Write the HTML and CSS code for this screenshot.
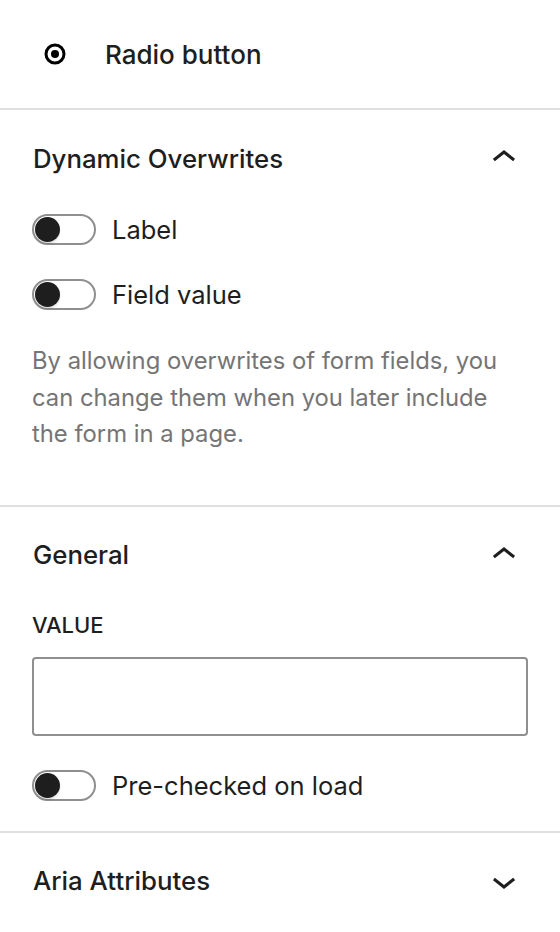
FILE: index.html
```html
<!DOCTYPE html>
<html lang="en">
<head>
<meta charset="utf-8">
<title>Radio button settings</title>
<link rel="stylesheet" href="styles.css">
</head>
<body>
<div class="sidebar">
  <div class="block-card">
    <span class="block-icon">
      <svg viewBox="0 0 24 24" width="24" height="24"><circle cx="12" cy="12" r="9" fill="none" stroke="#000" stroke-width="3"/><circle cx="12" cy="12" r="4" fill="#000"/></svg>
    </span>
    <span class="block-title">Radio button</span>
  </div>

  <section class="panel">
    <div class="panel-head">
      <span class="panel-title">Dynamic Overwrites</span>
      <span class="panel-toggle"><svg viewBox="0 0 24 24" width="48" height="48"><path d="M6.5 12.4L12 8l5.5 4.4-.9 1.2L12 10l-4.6 3.6-1-1.2z" fill="#1e1e1e"/></svg></span>
    </div>
    <div class="panel-body">
      <label class="toggle-row"><span class="toggle"><span class="thumb"></span></span><span class="toggle-label">Label</span></label>
      <label class="toggle-row"><span class="toggle"><span class="thumb"></span></span><span class="toggle-label">Field value</span></label>
      <p class="help">By allowing overwrites of form fields, you can change them when you later include the form in a page.</p>
    </div>
  </section>

  <section class="panel">
    <div class="panel-head">
      <span class="panel-title">General</span>
      <span class="panel-toggle"><svg viewBox="0 0 24 24" width="48" height="48"><path d="M6.5 12.4L12 8l5.5 4.4-.9 1.2L12 10l-4.6 3.6-1-1.2z" fill="#1e1e1e"/></svg></span>
    </div>
    <div class="panel-body general">
      <div class="field-label">VALUE</div>
      <div class="text-input"></div>
      <label class="toggle-row"><span class="toggle"><span class="thumb"></span></span><span class="toggle-label">Pre-checked on load</span></label>
    </div>
  </section>

  <section class="panel last">
    <div class="panel-head">
      <span class="panel-title">Aria Attributes</span>
      <span class="panel-toggle"><svg viewBox="0 0 24 24" width="48" height="48"><path d="M17.5 11.6L12 16l-5.5-4.4.9-1.2L12 14l4.6-3.6 1 1.2z" fill="#1e1e1e"/></svg></span>
    </div>
  </section>
</div>
</body>
</html>
```

FILE: styles.css
```css
html, body {
  margin: 0;
  padding: 0;
  background: #fff;
}
body {
  font-family: Inter, "Noto Sans", "Liberation Sans", sans-serif;
  color: #1e1e1e;
}
.sidebar {
  width: 560px;
}
.block-card {
  height: 108px;
  display: flex;
  align-items: center;
  padding-left: 43px;
  border-bottom: 2px solid #e0e0e0;
}
.block-icon {
  width: 24px;
  height: 24px;
  display: flex;
}
.block-title {
  margin-left: 38px;
  font-size: 26px;
  font-weight: 500;
}
.panel {
  border-bottom: 2px solid #e0e0e0;
}
.panel.last {
  border-bottom: none;
}
.panel-head {
  height: 96px;
  display: flex;
  align-items: center;
  justify-content: space-between;
  padding: 0 32px 0 33px;
}
.panel-title {
  font-size: 25.8px;
  font-weight: 500;
}
.panel-toggle {
  width: 48px;
  height: 48px;
  display: flex;
}
.panel-body {
  padding: 8px 32px 52px 32px;
}
.toggle-row {
  display: flex;
  align-items: center;
  height: 31px;
  margin-bottom: 34px;
}
.toggle {
  position: relative;
  box-sizing: border-box;
  width: 64px;
  height: 31px;
  border: 2px solid #8f8f8f;
  border-radius: 16px;
  flex: none;
}
.thumb {
  position: absolute;
  left: 1px;
  top: 1px;
  width: 25px;
  height: 25px;
  border-radius: 50%;
  background: #1e1e1e;
  box-shadow: 0 2px 2px rgba(0, 0, 0, 0.12);
}
.toggle-label {
  margin-left: 16px;
  font-size: 25.5px;
}
.help {
  margin: 0;
  margin-top: -1px;
  max-width: 474px;
  font-size: 23.8px;
  line-height: 36.5px;
  color: #757575;
}
.general {
  padding-bottom: 30px;
}
.field-label {
  font-size: 22px;
  font-weight: 500;
  line-height: 24px;
  margin-top: 2px;
}
.text-input {
  box-sizing: border-box;
  margin-top: 20px;
  height: 79px;
  width: 496px;
  border: 2px solid #8f8f8f;
  border-radius: 4px;
}
.general .toggle-row {
  margin-top: 34px;
  margin-bottom: 0;
}
```
